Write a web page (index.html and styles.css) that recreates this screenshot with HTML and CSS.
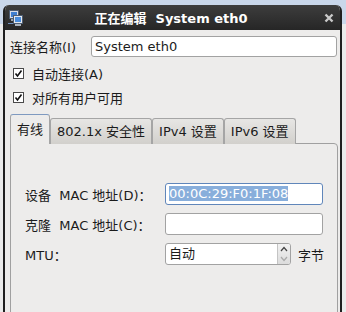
FILE: index.html
```html
<!DOCTYPE html>
<html lang="zh-CN">

<head>
    <meta charset="UTF-8">
    <meta name="viewport" content="width=device-width, initial-scale=1.0">
    <title>正在编辑 System eth0</title>
    <link rel="stylesheet" href="styles.css">
</head>

<body>
    <div class="window">
        <div class="titlebar">
            <svg class="app-icon" width="16" height="17" viewBox="0 0 16 17">
                <rect x="1.5" y="0.5" width="9" height="8" fill="#d8dde6" stroke="#4d5c70" />
                <rect x="3" y="2" width="6" height="5" fill="#3f7fd0" />
                <rect x="3" y="9" width="6" height="2" fill="#9aa3ae" />
                <rect x="5.5" y="5.5" width="9" height="8" fill="#e4e8ee" stroke="#4d5c70" />
                <rect x="7" y="7" width="6" height="5" fill="#4a8ddc" />
                <rect x="7" y="14" width="6" height="2" fill="#aab2bc" />
                <path d="M0 13.5 H5" stroke="#6f8fbf" stroke-width="1" />
            </svg>
            <div class="title">正在编辑&nbsp; System eth0</div>
            <svg class="close" width="10" height="10" viewBox="0 0 10 10">
                <path d="M1.5 1.5 L8.5 8.5 M8.5 1.5 L1.5 8.5" stroke="#c9c9c9" stroke-width="2.4" />
            </svg>
        </div>
        <div class="content">
            <div class="name-row">
                <label class="name-label">连接名称(I)</label>
                <div class="entry">System eth0</div>
            </div>
            <div class="checks">
                <div class="check">
                    <svg class="box" width="11" height="11" viewBox="0 0 11 11">
                        <rect x="0.5" y="0.5" width="10" height="10" fill="#fff" stroke="#4a4a4a" />
                        <path d="M2.5 5.5 L4.5 8 L8.5 2.5" fill="none" stroke="#111" stroke-width="1.6" />
                    </svg>
                    <span>自动连接(A)</span>
                </div>
                <div class="check">
                    <svg class="box" width="11" height="11" viewBox="0 0 11 11">
                        <rect x="0.5" y="0.5" width="10" height="10" fill="#fff" stroke="#4a4a4a" />
                        <path d="M2.5 5.5 L4.5 8 L8.5 2.5" fill="none" stroke="#111" stroke-width="1.6" />
                    </svg>
                    <span>对所有用户可用</span>
                </div>
            </div>
            <div class="tabs">
                <div class="tab active">有线</div>
                <div class="tab">802.1x 安全性</div>
                <div class="tab">IPv4 设置</div>
                <div class="tab">IPv6 设置</div>
            </div>
            <div class="panel">
                <div class="form">
                    <label>设备&nbsp; MAC 地址(D)：</label>
                    <div class="entry focus"><span class="sel">00:0C:29:F0:1F:08</span></div>
                    <label>克隆&nbsp; MAC 地址(C)：</label>
                    <div class="entry"></div>
                    <label>MTU：</label>
                    <div class="mtu">
                        <div class="spin">
                            <span class="spin-text">自动</span>
                            <div class="spin-btns">
                                <svg width="8" height="6" viewBox="0 0 8 6"><path d="M1 5 L4 1.5 L7 5" fill="none" stroke="#444" stroke-width="1.2" /></svg>
                                <svg width="8" height="6" viewBox="0 0 8 6"><path d="M1 1 L4 4.5 L7 1" fill="none" stroke="#aaa" stroke-width="1.2" /></svg>
                            </div>
                        </div>
                        <span>字节</span>
                    </div>
                </div>
            </div>
        </div>
    </div>
</body>

</html>
```

FILE: styles.css
```css
* {
    margin: 0;
    padding: 0;
    box-sizing: border-box;
}

body {
    width: 346px;
    height: 312px;
    overflow: hidden;
    padding: 5px 4px 0 3px;
    background: linear-gradient(#c9d7ea 0 24px, #ebebeb 24px);
    font-family: "DejaVu Sans", "Noto Sans CJK SC", sans-serif;
    font-size: 13px;
    color: #1b1b1b;
}

.window {
    width: 339px;
    height: 307px;
    background: #edeceb;
    border-left: 2px solid #1f1f1f;
    border-right: 2px solid #1f1f1f;
    border-radius: 6px 6px 0 0;
    overflow: hidden;
}

.titlebar {
    height: 25px;
    display: grid;
    grid-template-columns: 1fr auto 1fr;
    align-items: center;
    padding: 0 6px 0 3px;
    background: linear-gradient(#3d3d3d, #262626);
    color: #fff;
    font-weight: bold;
}

.app-icon {
    margin-top: 1px;
}

.close {
    justify-self: end;
}

.content {
    padding: 6px 3px 0 5px;
}

.name-row {
    display: flex;
    align-items: center;
}

.name-label {
    width: 81px;
}

.entry {
    height: 21px;
    flex: 1;
    padding: 0 3px;
    line-height: 19px;
    background: #fff;
    border: 1px solid #a2a2a2;
    border-radius: 3px;
    white-space: nowrap;
    overflow: hidden;
}

.checks {
    margin-top: 4px;
}

.check {
    height: 24px;
    display: flex;
    align-items: center;
    gap: 8px;
    padding-left: 3px;
}

.tabs {
    display: flex;
    align-items: flex-end;
    margin-top: 5px;
    position: relative;
    z-index: 1;
}

.tab {
    height: 26px;
    padding: 0 6px;
    line-height: 25px;
    white-space: nowrap;
    background: linear-gradient(#e7e6e4, #d2d0cc);
    border: 1px solid #a5a5a5;
    border-bottom: none;
    border-radius: 3px 3px 0 0;
}

.tab.active {
    height: 30px;
    line-height: 29px;
    background: #edeceb;
    border-top-color: #7f9ac0;
}

.panel {
    height: 200px;
    margin: -1px -1px 0 0;
    padding: 39px 0 0 14px;
    border: 1px solid #a0a0a0;
    border-radius: 0 4px 0 0;
}

.form {
    display: grid;
    grid-template-columns: 140px auto;
    grid-auto-rows: 22px;
    row-gap: 8px;
    align-items: center;
}

.form .entry {
    width: 158px;
    height: 22px;
    line-height: 20px;
}

.entry.focus {
    border-color: #6086ba;
}

.sel {
    background: #88aedb;
    color: #fff;
}

.mtu {
    display: flex;
    align-items: center;
    gap: 7px;
    white-space: nowrap;
}

.spin {
    width: 126px;
    height: 22px;
    display: flex;
    background: #fff;
    border: 1px solid #a2a2a2;
    border-radius: 3px;
    overflow: hidden;
}

.spin-text {
    flex: 1;
    padding-left: 3px;
    line-height: 20px;
}

.spin-btns {
    width: 13px;
    display: flex;
    flex-direction: column;
    justify-content: space-around;
    align-items: center;
    background: linear-gradient(#f2f2f2, #dcdcdc);
    border-left: 1px solid #c4c4c4;
}
```
